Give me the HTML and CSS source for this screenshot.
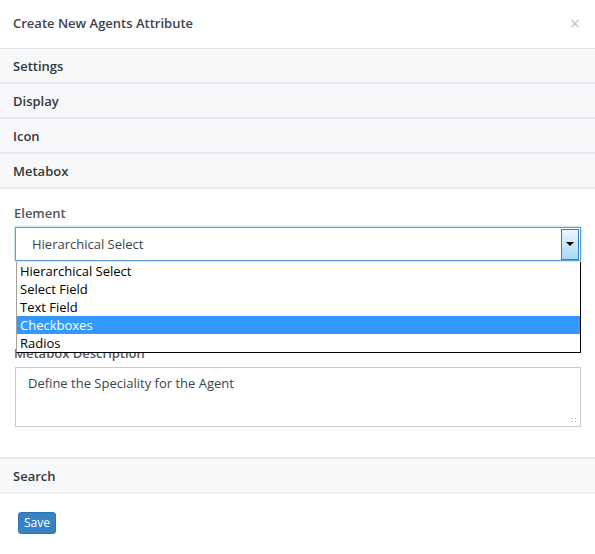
FILE: index.html
```html
<!DOCTYPE html>
<html>
<head>
<meta charset="utf-8">
<link rel="stylesheet" href="styles.css">
</head>
<body>
<div class="modal">
  <div class="modal-header">
    <h1 class="modal-title">Create New Agents Attribute</h1>
    <span class="close">&times;</span>
  </div>
  <div class="section">Settings</div>
  <div class="section">Display</div>
  <div class="section">Icon</div>
  <div class="section">Metabox</div>
  <div class="section-body">
    <label class="field-label">Element</label>
    <div class="select-wrap">
      <div class="select">
        <span class="select-value">Hierarchical Select</span>
        <span class="select-btn"><span class="arrow"></span></span>
      </div>
      <ul class="dropdown">
        <li>Hierarchical Select</li>
        <li>Select Field</li>
        <li>Text Field</li>
        <li class="active">Checkboxes</li>
        <li>Radios</li>
      </ul>
    </div>
    <label class="field-label desc-label">Metabox Description</label>
    <div class="textarea">Define the Speciality for the Agent<span class="grip"></span></div>
  </div>
  <div class="section search">Search</div>
  <div class="footer">
    <button class="btn">Save</button>
  </div>
</div>
</body>
</html>
```
FILE: styles.css
```css
html, body {
  margin: 0;
  padding: 0;
  background: #fff;
}
body {
  font-family: "Open Sans", "Noto Sans", sans-serif;
  color: #32373c;
  width: 595px;
  height: 554px;
  overflow: hidden;
}
.modal {
  display: flex;
  flex-direction: column;
}
.modal-header {
  height: 48px;
  display: flex;
  align-items: center;
  justify-content: space-between;
  padding: 0 15px 0 13px;
  border-bottom: 1px solid #e5e6e8;
}
.modal-title {
  margin: 0;
  font-size: 13px;
  font-weight: 600;
  color: #3c434a;
  margin-top: -2px;
}
.close {
  font-size: 18px;
  color: #c3c4c7;
  line-height: 1;
  margin-top: -3px;
}
.section {
  height: 33px;
  display: flex;
  align-items: center;
  padding-left: 13px;
  font-size: 13px;
  font-weight: 600;
  color: #32373c;
  background: #f7f8fa;
  border-bottom: 2px solid #e8e9ec;
}
.section-body {
  padding: 16px 14px 30px 14px;
  display: flex;
  flex-direction: column;
}
.field-label {
  font-size: 13px;
  font-weight: 600;
  color: #50575e;
  line-height: 16px;
  margin-bottom: 6px;
}
.select-wrap {
  position: relative;
}
.select {
  height: 32px;
  margin-left: 1px;
  border: 1px solid #5b9dd9;
  box-shadow: 0 0 2px rgba(30, 140, 190, 0.6);
  display: flex;
  align-items: center;
  justify-content: space-between;
  background: #fff;
}
.select-value {
  font-size: 13px;
  color: #3c434a;
  padding-left: 16px;
}
.select-btn {
  width: 16px;
  height: 29px;
  margin-right: 1px;
  border: 1px solid #3c7fb1;
  background: linear-gradient(#eaf6fd, #a7d9f5);
  display: flex;
  align-items: center;
  justify-content: center;
}
.arrow {
  width: 0;
  height: 0;
  border-left: 4px solid transparent;
  border-right: 4px solid transparent;
  border-top: 4px solid #000;
}
.dropdown {
  position: absolute;
  top: 35px;
  left: 2px;
  right: 0;
  margin: 0;
  padding: 0;
  list-style: none;
  background: #fff;
  border-left: 1px solid #a0a0a0;
  border-right: 1px solid #000;
  border-bottom: 1px solid #000;
  z-index: 2;
}
.dropdown li {
  height: 18px;
  line-height: 18px;
  font-size: 13px;
  color: #000;
  padding-left: 3px;
}
.dropdown li.active {
  background: #3399ff;
  color: #fff;
}
.desc-label {
  margin-top: 84px;
  margin-bottom: 6px;
}
.textarea {
  position: relative;
  margin-left: 1px;
  border: 1px solid #c5cbd0;
  padding: 6px 12px;
  font-size: 13px;
  color: #3c434a;
  box-sizing: border-box;
  height: 60px;
}
.grip {
  position: absolute;
  right: 2px;
  bottom: 2px;
  width: 7px;
  height: 7px;
  background-image: radial-gradient(circle, #b0b0b0 0.8px, transparent 1px);
  background-size: 3px 3px;
}
.section.search {
  border-top: 2px solid #e8e9ec;
  border-bottom: 2px solid #eef0f2;
}
.footer {
  padding: 16px 18px;
}
.btn {
  font-family: "Open Sans", "Noto Sans", sans-serif;
  font-size: 12px;
  color: #fff;
  background: #3582c4;
  border: 1px solid #2f74b0;
  border-radius: 3px;
  height: 22px;
  width: 38px;
  padding: 0;
  line-height: 18px;
}
```
